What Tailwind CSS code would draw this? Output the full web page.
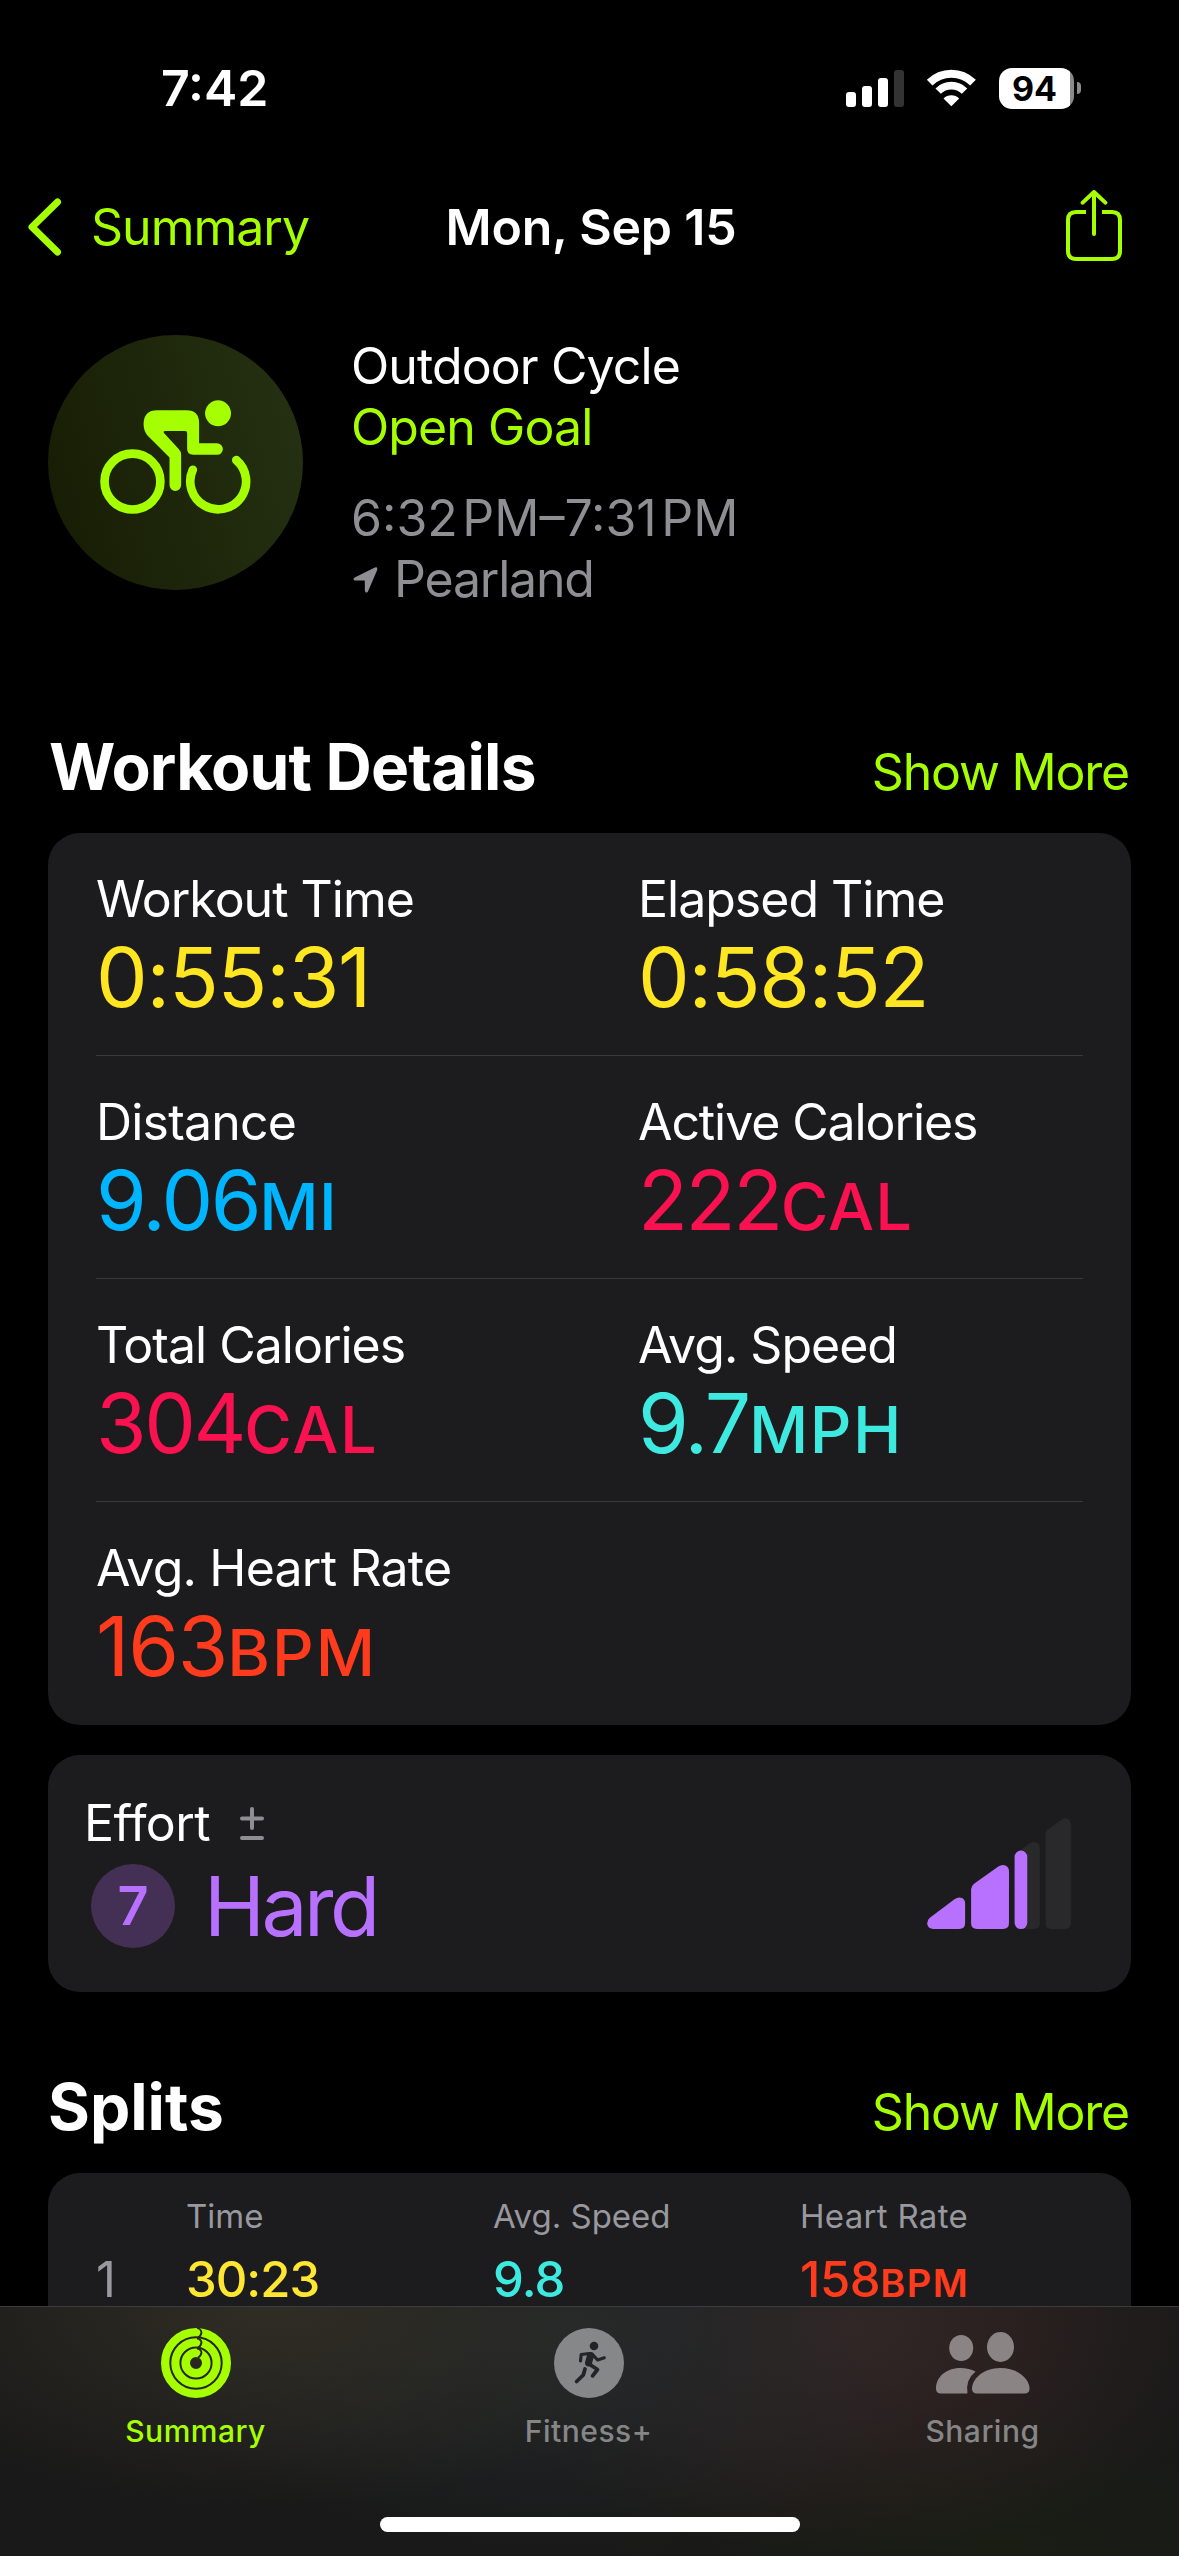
<!DOCTYPE html>
<html lang="en">
<head>
  <meta charset="UTF-8">
  <meta name="viewport" content="width=device-width, initial-scale=1.0">
  <title>Workout Summary</title>
  <script src="https://cdn.jsdelivr.net/npm/@tailwindcss/browser@4"></script>
</head>
<body class="bg-black">
  <div class="relative w-[1179px] h-[2556px] overflow-hidden bg-black text-white font-['Inter','Liberation_Sans',sans-serif]">

    <!-- Status bar -->
    <div class="flex items-center justify-between h-44 pl-[161px] pr-[98px]">
      <span class="text-[50px] leading-[60px] font-semibold">7:42</span>
      <div class="flex items-center">
        <svg class="w-[58px] h-[37px]" viewBox="0 0 58 37" fill="#fff">
          <rect x="0" y="22" width="10" height="15" rx="3" />
          <rect x="16" y="16" width="10" height="21" rx="3" />
          <rect x="32" y="8" width="10" height="29" rx="3" />
          <rect x="48" y="0" width="10" height="37" rx="3" fill="#333" />
        </svg>
        <svg class="w-[51px] h-[38px] ml-[22px]" viewBox="438 86 153 114" fill="none" stroke="#fff">
          <path d="M449 127A92 92 0 0 1 579 127" stroke-width="24" />
          <path d="M474.4 152.4A56 56 0 0 1 553.6 152.4" stroke-width="23" />
          <path d="M514 198L490.5 174.5A33 33 0 0 1 537.5 174.5Z" fill="#fff" stroke="none" />
        </svg>
        <div class="flex items-center ml-[22px]">
          <div class="flex items-center justify-center w-[75px] h-[41px] pr-1 rounded-[13px] bg-linear-to-r from-white from-[95%] to-[#8a8a8a] to-[95%]">
            <span class="text-[34px] leading-[41px] font-bold text-black">94</span>
          </div>
          <div class="w-1 h-3 ml-[3px] rounded-r-full bg-[#8a8a8a]"></div>
        </div>
      </div>
    </div>

    <!-- Navigation bar -->
    <div class="grid grid-cols-3 items-center h-[102px] px-7">
      <div class="flex items-center text-[#a6ff00]">
        <svg class="w-[34px] h-[58px]" viewBox="0 0 34 58" fill="none" stroke="currentColor" stroke-width="7" stroke-linecap="round" stroke-linejoin="round">
          <path d="M29.5 4L4 29L29.5 54" />
        </svg>
        <span class="ml-[29px] text-[50px] leading-[60px] tracking-[-1px]">Summary</span>
      </div>
      <h1 class="pl-[3px] text-center text-[50px] leading-[60px] font-semibold tracking-[-0.2px] whitespace-nowrap">Mon, Sep 15</h1>
      <svg class="w-14 h-[71px] mr-[29px] mb-[3px] justify-self-end text-[#a6ff00]" viewBox="0 0 168 213" fill="none" stroke="currentColor" stroke-width="12">
        <path d="M60 66H30Q6 66 6 90V183Q6 207 30 207H138Q162 207 162 183V90Q162 66 138 66H108" />
        <path d="M84 8V132M50 38L84 6L118 38" stroke-linecap="round" stroke-linejoin="round" />
      </svg>
    </div>

    <!-- Workout header -->
    <div class="flex mt-[57px] pl-12 h-[275px]">
      <div class="flex items-center justify-center w-[255px] h-[255px] pb-[11px] rounded-full bg-linear-75 from-[#161c04] to-[#263213]">
        <svg class="w-[151px] h-[114px]" viewBox="211 239 452 343" fill="#a6ff00">
          <circle cx="565" cy="279" r="39" />
          <path d="M382 270H470Q508 270 508 308V369H562a17.5 17.5 0 0 1 0 35H490Q472 404 472 386V338Q472 332 466 332H406Q398 332 403 339L446 386Q454 394 454 404V495a17.5 17.5 0 0 1 -35 0V412L352 345Q341 331 341 312Q341 270 382 270Z" />
          <g fill="none" stroke="#a6ff00" stroke-width="26" stroke-linecap="round">
            <circle cx="307.500" cy="484.500" r="84" />
            <path d="M489 449A84 84 0 1 0 620 420" />
          </g>
        </svg>
      </div>
      <div class="ml-12 pt-px text-[50px] leading-[61px]">
        <p class="tracking-[-0.9px]">Outdoor Cycle</p>
        <p class="tracking-[-0.9px] text-[#a6ff00]">Open Goal</p>
        <p class="mt-[30px] text-[#8e8e93]">6:32&#8202;PM–7:31&#8202;PM</p>
        <div class="flex items-center text-[#8e8e93]">
          <svg class="w-[25px] h-[26px] ml-0.5" viewBox="0 0 72 77" fill="currentColor">
            <path d="M62 2L4 31Q-3 36 4 40H32Q34 40 34 43V70Q37 80 43 73L70 10Q74 -2 62 2Z" />
          </svg>
          <span class="ml-4 tracking-[-1.2px]">Pearland</span>
        </div>
      </div>
    </div>

    <!-- Workout details -->
    <div class="flex items-baseline justify-between h-20 mt-[117px] pl-[49px] pr-[50px]">
      <h2 class="text-[64px] leading-[80px] font-bold tracking-[-0.8px]">Workout Details</h2>
      <a href="#" class="text-[50px] leading-[60px] tracking-[-1.2px] text-[#a6ff00]">Show More</a>
    </div>
    <div class="mt-[26px] mx-12 px-12 rounded-[32px] bg-[#1c1c1e] text-[50px] leading-[60px] tracking-[-1px]">
      <div class="grid grid-cols-[542px_1fr] h-[223px] pt-9 border-b border-[#3a3a3c]">
        <div>
          <p>Workout Time</p>
          <p class="mt-[7px] text-[82px] leading-[84px] tracking-[-1.2px] text-[#ffe620]">0:55:31</p>
        </div>
        <div>
          <p>Elapsed Time</p>
          <p class="mt-[7px] text-[82px] leading-[84px] tracking-[-1.3px] text-[#ffe620]">0:58:52</p>
        </div>
      </div>
      <div class="grid grid-cols-[542px_1fr] h-[223px] pt-9 border-b border-[#3a3a3c]">
        <div>
          <p class="tracking-[-0.8px]">Distance</p>
          <p class="mt-[7px] text-[82px] leading-[84px] tracking-[-2.4px] text-[#00b5ff]">9.06<span class="text-[65px] tracking-[0.5px] font-medium">MI</span></p>
        </div>
        <div>
          <p class="tracking-[-1.1px]">Active Calories</p>
          <p class="mt-[7px] text-[82px] leading-[84px] tracking-[-2.4px] text-[#fa114f]">222<span class="text-[65px] tracking-[1px] font-medium">CAL</span></p>
        </div>
      </div>
      <div class="grid grid-cols-[542px_1fr] h-[223px] pt-9 border-b border-[#3a3a3c]">
        <div>
          <p>Total Calories</p>
          <p class="mt-[7px] text-[82px] leading-[84px] tracking-[-2.4px] text-[#fa114f]">304<span class="text-[65px] tracking-[1.8px] font-medium">CAL</span></p>
        </div>
        <div>
          <p>Avg. Speed</p>
          <p class="mt-[7px] text-[82px] leading-[84px] tracking-[-2.2px] text-[#3ee9e0]">9.7<span class="text-[65px] tracking-[1.5px] font-medium">MPH</span></p>
        </div>
      </div>
      <div class="h-[223px] pt-9">
        <p class="tracking-[-0.8px]">Avg. Heart Rate</p>
        <p class="mt-[7px] text-[82px] leading-[84px] tracking-[-1.2px] text-[#ff3b1d]">163<span class="text-[65px] tracking-[2px] font-medium">BPM</span></p>
      </div>
    </div>

    <!-- Effort -->
    <div class="flex items-center justify-between h-[237px] mt-[30px] mx-12 pl-9 pr-[60px] rounded-[32px] bg-[#1c1c1e]">
      <div class="h-[161px]">
        <div class="flex items-center text-[50px] leading-[60px]">
          <span class="tracking-[-0.6px]">Effort</span>
          <svg class="w-6 h-[33px] ml-[30px]" viewBox="0 0 24 33" fill="none" stroke="#8e8e93" stroke-width="4" stroke-linecap="round">
            <path d="M2 11.5H22M12 2V21M2 31H22" />
          </svg>
        </div>
        <div class="flex items-center mt-2.5 ml-[7px]">
          <span class="flex items-center justify-center w-[84px] h-[84px] rounded-full bg-[#443054] text-[54px] leading-[84px] font-semibold text-[#b870ff]">7</span>
          <span class="ml-[29px] pt-0.5 text-[82px] leading-[84px] tracking-[-3.5px] text-[#b870ff]">Hard</span>
        </div>
      </div>
      <svg class="w-36 h-[111px]" viewBox="201 113 432 334">
        <g fill="#29292c">
          <path d="M464 225L508 190Q520 182 530 187Q540 192 540 205V429Q540 447 522 447H482Q464 447 464 429Z" />
          <path d="M557 163Q557 151 567 145L605 118Q616 110 626 117Q633 122 633 132V429Q633 447 615 447H575Q557 447 557 429Z" />
        </g>
        <g fill="#b870ff">
          <path d="M208 414L284 357Q295 349 306 354Q315 359 315 370V429Q315 447 297 447H218Q201 445 201 430Q201 420 208 414Z" />
          <path d="M333 328Q333 318 342 311L415 259Q427 251 438 257Q447 262 447 274V429Q447 447 429 447H351Q333 447 333 429Z" />
          <rect x="464" y="211" width="38" height="236" rx="19" />
        </g>
      </svg>
    </div>

    <!-- Splits -->
    <div class="flex items-baseline justify-between h-20 mt-[75px] pl-12 pr-[50px]">
      <h2 class="text-[64px] leading-[80px] font-bold">Splits</h2>
      <a href="#" class="text-[50px] leading-[60px] tracking-[-1.2px] text-[#a6ff00]">Show More</a>
    </div>
    <div class="h-[400px] mt-[26px] mx-12 pl-12 pt-[23px] rounded-[32px] bg-[#1c1c1e]">
      <div class="grid grid-cols-[90px_307px_307px_1fr] text-[33px] leading-[40px] text-[#98989e]">
        <span></span>
        <span>Time</span>
        <span>Avg. Speed</span>
        <span class="tracking-[0.3px]">Heart Rate</span>
      </div>
      <div class="grid grid-cols-[90px_307px_307px_1fr] mt-[14px] text-[49px] leading-[60px] font-medium">
        <span class="font-normal text-[#98989e]">1</span>
        <span class="tracking-[-1px] text-[#ffe632]">30:23</span>
        <span class="tracking-[-0.8px] text-[#3ee9e0]">9.8</span>
        <span class="tracking-[-0.4px] text-[#ff3b1d]">158<span class="text-[38px] tracking-[1.4px] font-semibold">BPM</span></span>
      </div>
    </div>

    <!-- Tab bar -->
    <div class="absolute inset-x-0 bottom-0 h-[250px] border-t border-[#3c3c3d] bg-[#191919]">
      <div class="absolute inset-0 bg-[radial-gradient(420px_200px_at_270px_0px,#302d24,transparent),radial-gradient(420px_220px_at_560px_20px,#24292b,transparent),radial-gradient(380px_230px_at_850px_20px,#362624,transparent),radial-gradient(400px_150px_at_1000px_240px,#191d14,transparent)]"></div>
      <div class="relative grid grid-cols-3 pt-[21px] text-[30px] leading-9 font-medium tracking-[0.5px] text-[#868687]">
        <div class="flex flex-col items-center pr-0.5 text-[#a6ff00]">
          <svg class="w-[70px] h-[70px]" viewBox="0 0 70 70" fill="none">
            <circle cx="35" cy="35" r="20.500" stroke="currentColor" stroke-width="29" />
            <g stroke="#25271b" stroke-width="2">
              <circle cx="35" cy="35" r="25.700" />
              <circle cx="35" cy="35" r="15.600" />
              <path d="M36 0Q40 1 40.5 4.5Q40 8 37 9.5M36 10.5Q40 11 40.5 14.5Q40 18 37 19.5M36 20.5Q40 21 40.5 24.5Q40 28 37 29.5" stroke-width="1.800" />
            </g>
          </svg>
          <span class="mt-[15px]">Summary</span>
        </div>
        <div class="flex flex-col items-center pr-0.5">
          <svg class="w-[70px] h-[70px]" viewBox="0 0 70 70" fill="none">
            <circle cx="35" cy="35" r="35" fill="#868788" />
            <circle cx="40" cy="18" r="4.300" fill="#222527" />
            <g stroke="#222527" stroke-linecap="round" stroke-linejoin="round" stroke-width="3.200">
              <path d="M26.5 33L27.2 26.5L35 25.5M39 27L43.6 32L50.3 29.8" />
              <path d="M35 36L43.5 41.5L38.6 47.8M31 41L29.3 47L22.6 53.5" stroke-width="3.800" />
              <path d="M36.5 27.5L34.5 35" stroke-width="7" />
            </g>
          </svg>
          <span class="mt-[15px]">Fitness+</span>
        </div>
        <div class="flex flex-col items-center">
          <svg class="w-[94px] h-[70px]" viewBox="0 0 94 70" fill="#8a8584">
            <ellipse cx="25.200" cy="20" rx="12" ry="13" />
            <ellipse cx="64.500" cy="19" rx="13.500" ry="15" />
            <path d="M5 65.5Q0 65.5 0 60.5C0 50 9 40 24.5 40Q33 40 39.5 43.5Q29 52 31.5 65.5Z" />
            <path d="M41 65.5Q36 65.5 36 60.5C36 52 46 40 64.5 40C83 40 93.5 52 93.5 60.5Q93.5 65.5 88.5 65.5Z" />
          </svg>
          <span class="mt-[15px]">Sharing</span>
        </div>
      </div>
      <!-- Home indicator -->
      <div class="absolute bottom-6 left-[380px] w-[420px] h-[15px] rounded-full bg-white"></div>
    </div>
  </div>
</body>
</html>
